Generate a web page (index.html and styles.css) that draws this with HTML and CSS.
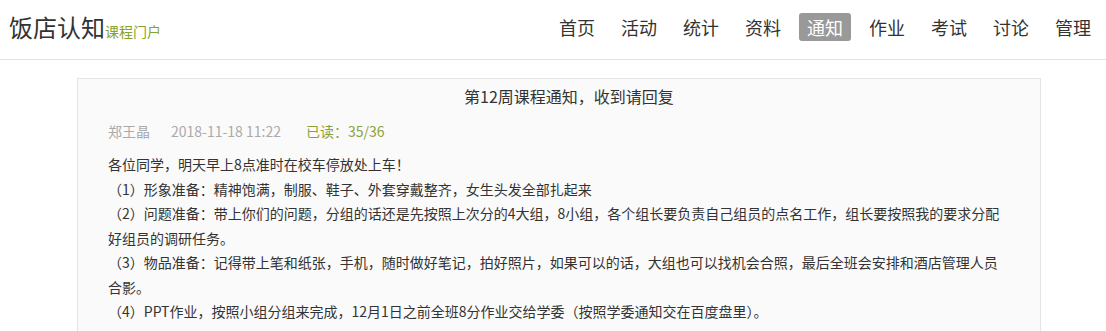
FILE: index.html
```html
<!DOCTYPE html>
<html lang="zh-CN">
<head>
<meta charset="utf-8">
<title>饭店认知 课程门户</title>
<link rel="stylesheet" href="styles.css">
</head>
<body>
<header class="header">
  <div class="brand">
    <span class="brand-name">饭店认知</span><span class="brand-sub">课程门户</span>
  </div>
  <nav class="nav">
    <a class="nav-item" href="#">首页</a>
    <a class="nav-item" href="#">活动</a>
    <a class="nav-item" href="#">统计</a>
    <a class="nav-item" href="#">资料</a>
    <a class="nav-item active" href="#">通知</a>
    <a class="nav-item" href="#">作业</a>
    <a class="nav-item" href="#">考试</a>
    <a class="nav-item" href="#">讨论</a>
    <a class="nav-item" href="#">管理</a>
  </nav>
</header>
<main class="main">
  <article class="notice">
    <h1 class="notice-title">第12周课程通知，收到请回复</h1>
    <div class="notice-meta">
      <span class="meta-author">郑王晶</span>
      <span class="meta-date">2018-11-18 11:22</span>
      <span class="meta-read">已读：35/36</span>
    </div>
    <div class="notice-body">
      <p>各位同学，明天早上8点准时在校车停放处上车！</p>
      <p>（1）形象准备：精神饱满，制服、鞋子、外套穿戴整齐，女生头发全部扎起来</p>
      <p>（2）问题准备：带上你们的问题，分组的话还是先按照上次分的4大组，8小组，各个组长要负责自己组员的点名工作，组长要按照我的要求分配好组员的调研任务。</p>
      <p>（3）物品准备：记得带上笔和纸张，手机，随时做好笔记，拍好照片，如果可以的话，大组也可以找机会合照，最后全班会安排和酒店管理人员合影。</p>
      <p>（4）PPT作业，按照小组分组来完成，12月1日之前全班8分作业交给学委（按照学委通知交在百度盘里）。</p>
    </div>
  </article>
</main>
</body>
</html>
```

FILE: styles.css
```css
* { box-sizing: border-box; }
html, body {
  margin: 0;
  padding: 0;
  background: #fff;
  font-family: "Noto Sans CJK SC", "Noto Sans", sans-serif;
  color: #333;
}
.header {
  height: 60px;
  border-bottom: 1px solid #e3e3e3;
  display: flex;
  justify-content: space-between;
  align-items: flex-start;
  padding: 13px 7px 0 9px;
}
.brand {
  display: flex;
  align-items: baseline;
  line-height: 28px;
}
.brand-name {
  font-size: 24px;
  color: #333;
}
.brand-sub {
  font-size: 14px;
  color: #84a42c;
}
.nav {
  display: flex;
  gap: 10px;
}
.nav-item {
  font-size: 18px;
  line-height: 28px;
  padding: 0 8px;
  color: #333;
  text-decoration: none;
  border-radius: 3px;
}
.nav-item.active {
  background: #999;
  color: #fff;
}
.main {
  padding: 18px 0 0 77px;
}
.notice {
  width: 964px;
  background: #fafafa;
  border: 1px solid #e4e4e4;
  border-bottom: none;
  padding: 5px 30px 20px 30px;
}
.notice-title {
  margin: 0;
  padding-left: 20px;
  font-size: 16px;
  font-weight: normal;
  line-height: 24px;
  text-align: center;
  color: #333;
}
.notice-meta {
  margin-top: 11px;
  font-size: 14px;
  line-height: 24px;
  color: #aaa;
  display: flex;
}
.meta-author { margin-right: 21px; }
.meta-date { margin-right: 25px; }
.meta-read { color: #8da23a; }
.notice-body {
  margin-top: 9px;
  font-size: 14px;
  line-height: 24.5px;
  color: #333;
}
.notice-body p {
  margin: 0;
}
```
